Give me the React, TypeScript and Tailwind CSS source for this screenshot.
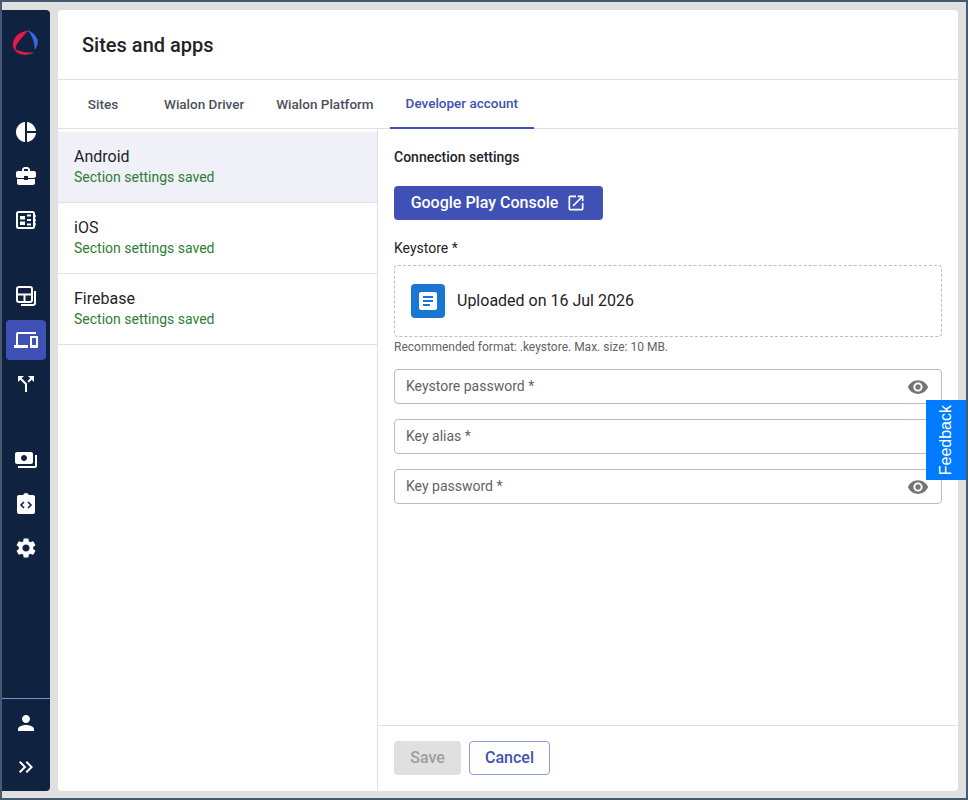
import { ReactNode } from "react";

const roboto = "font-['Roboto',sans-serif]";

function Icon({ d, className = "h-6 w-6" }: { d: string; className?: string }) {
  return (
    <svg viewBox="0 0 24 24" fill="currentColor" className={className}>
      <path d={d} />
    </svg>
  );
}

const icons = {
  pie: "M11 2v20c-5.07-.5-9-4.79-9-10s3.93-9.5 9-10zm2.03 0v8.99H22c-.47-4.74-4.24-8.52-8.97-8.99zm0 11.01V22c4.74-.47 8.5-4.25 8.97-8.99h-8.97z",
  case: "M10 16v-1H3.01L3 19c0 1.11.89 2 2 2h14c1.11 0 2-.89 2-2v-4h-7v1h-4zm10-9h-4.01V5l-2-2h-4l-2 2v2H4c-1.1 0-2 .9-2 2v3c0 1.11.89 2 2 2h6v-2h4v2h6c1.1 0 2-.9 2-2V9c0-1.1-.9-2-2-2zm-6 0h-4V5h4v2z",
  devices: "M4 6h18V4H4c-1.1 0-2 .9-2 2v11H0v3h14v-3H4V6zm19 2h-6c-.55 0-1 .45-1 1v10c0 .55.45 1 1 1h6c.55 0 1-.45 1-1V9c0-.55-.45-1-1-1zm-1 9h-4v-7h4v7z",
  split: "M14 4l2.29 2.29-2.88 2.88 1.42 1.42 2.88-2.88L20 10V4h-6zm-4 0H4v6l2.29-2.29 4.71 4.7V20h2v-8.41l-5.29-5.3L10 4z",
  payments: "M19 14V6c0-1.1-.9-2-2-2H3c-1.1 0-2 .9-2 2v8c0 1.1.9 2 2 2h14c1.1 0 2-.9 2-2zm-9-1c-1.66 0-3-1.34-3-3s1.34-3 3-3 3 1.34 3 3-1.34 3-3 3zm13-6v11c0 1.1-.9 2-2 2H4v-2h17V7h2z",
  settings: "M19.14 12.94c.04-.3.06-.61.06-.94 0-.32-.02-.64-.07-.94l2.03-1.58c.18-.14.23-.41.12-.61l-1.92-3.32c-.12-.22-.37-.29-.59-.22l-2.39.96c-.5-.38-1.03-.7-1.62-.94l-.36-2.54c-.04-.24-.24-.41-.48-.41h-3.84c-.24 0-.43.17-.47.41l-.36 2.54c-.59.24-1.13.57-1.62.94l-2.39-.96c-.22-.08-.47 0-.59.22L2.74 8.87c-.12.21-.08.47.12.61l2.03 1.58c-.05.3-.09.63-.09.94s.02.64.07.94l-2.03 1.58c-.18.14-.23.41-.12.61l1.92 3.32c.12.22.37.29.59.22l2.39-.96c.5.38 1.03.7 1.62.94l.36 2.54c.05.24.24.41.48.41h3.84c.24 0 .44-.17.47-.41l.36-2.54c.59-.24 1.13-.56 1.62-.94l2.39.96c.22.08.47 0 .59-.22l1.92-3.32c.12-.22.07-.47-.12-.61l-2.01-1.58zM12 15.6c-1.98 0-3.6-1.62-3.6-3.6s1.62-3.6 3.6-3.6 3.6 1.62 3.6 3.6-1.62 3.6-3.6 3.6z",
  person: "M12 12c2.21 0 4-1.79 4-4s-1.79-4-4-4-4 1.79-4 4 1.79 4 4 4zm0 2c-2.67 0-8 1.34-8 4v2h16v-2c0-2.66-5.33-4-8-4z",
  double: "M6.41 6L5 7.41 9.58 12 5 16.59 6.41 18l6-6zM13 6l-1.41 1.41L16.17 12l-4.58 4.59L13 18l6-6z",
  eye: "M12 4.5C7 4.5 2.73 7.61 1 12c1.73 4.39 6 7.5 11 7.5s9.27-3.11 11-7.5c-1.73-4.39-6-7.5-11-7.5zM12 17c-2.76 0-5-2.24-5-5s2.24-5 5-5 5 2.24 5 5-2.24 5-5 5zm0-8c-1.66 0-3 1.34-3 3s1.34 3 3 3 3-1.34 3-3-1.34-3-3-3z",
  open: "M19 19H5V5h7V3H5c-1.11 0-2 .9-2 2v14c0 1.1.89 2 2 2h14c1.1 0 2-.9 2-2v-7h-2v7zM14 3v2h3.59l-9.83 9.83 1.41 1.41L19 6.41V10h2V3h-7z",
  article: "M19 3H5c-1.1 0-2 .9-2 2v14c0 1.1.9 2 2 2h14c1.1 0 2-.9 2-2V5c0-1.1-.9-2-2-2zm-5 14H7v-2h7v2zm3-4H7v-2h10v2zm0-4H7V7h10v2z",
};

function Logo() {
  return (
    <svg viewBox="0 0 28 28" className="h-7 w-7">
      <path d="M16.5 1.5C9 2 2 7 1 14c-.5 4 1 7 3 9-1-4 0-7 2-9.500C8.500 10 12.500 5.500 16.500 1.500z" fill="#e8174a" />
      <path d="M3.500 22c2.500 4 10 5.500 19 1.500-5 .3-12-.2-19-3z" fill="#e8174a" />
      <path d="M15.500 1c3.500 1 8 4.500 10 9.500 1 4-.5 8-3 10.500 .5-7-2-14-7-20z" fill="#3a63e6" />
    </svg>
  );
}

function FeedIcon() {
  return (
    <svg viewBox="0 0 24 24" className="h-6 w-6" fill="none" stroke="currentColor" strokeWidth="2">
      <rect x="3" y="4" width="17" height="16" rx="1.5" />
      <path d="M6 8h5v3.500H6zM6 13.500h5V17H6z" fill="currentColor" stroke="none" />
      <path d="M13 7.500h4M13 12h4M13 16.500h4" strokeWidth="1.800" />
      <path d="M21 7v2.500M21 11v2.500M21 15v2.500" strokeWidth="1.500" />
    </svg>
  );
}

function LayersIcon() {
  return (
    <svg viewBox="0 0 24 24" className="h-6 w-6" fill="none" stroke="currentColor" strokeWidth="2">
      <rect x="3" y="3" width="15" height="15" rx="2" />
      <path d="M3 10.500h15M10.500 10.500V18" />
      <path d="M21 7v12a2 2 0 0 1-2 2H7" />
    </svg>
  );
}

function CodeClipIcon() {
  return (
    <svg viewBox="0 0 24 24" className="h-6 w-6" fill="currentColor">
      <path d="M19 3h-4.180C14.400 1.840 13.300 1 12 1c-1.300 0-2.400.840-2.820 2H5c-1.100 0-2 .900-2 2v15c0 1.100.900 2 2 2h14c1.100 0 2-.900 2-2V5c0-1.100-.900-2-2-2z" />
      <path d="M10 10l-3 3 3 3M14 10l3 3-3 3" fill="none" stroke="#0f2240" strokeWidth="1.600" />
    </svg>
  );
}

function NavItem({ children, active, className = "" }: { children: ReactNode; active?: boolean; className?: string }) {
  return (
    <div className={`mx-1 flex h-10 w-10 items-center justify-center rounded text-white ${active ? "bg-[#3f51b5]" : ""} ${className}`}>
      {children}
    </div>
  );
}

function Sidebar() {
  return (
    <aside className="flex w-12 shrink-0 flex-col rounded-r-[4px] bg-[#0f2240]">
      <div className="mt-[19px] flex justify-center">
        <Logo />
      </div>
      <div className="mt-[55px] flex flex-col gap-1">
        <NavItem><Icon d={icons.pie} /></NavItem>
        <NavItem><Icon d={icons.case} /></NavItem>
        <NavItem><FeedIcon /></NavItem>
      </div>
      <div className="mt-[36px] flex flex-col gap-1">
        <NavItem><LayersIcon /></NavItem>
        <NavItem active><Icon d={icons.devices} /></NavItem>
        <NavItem><Icon d={icons.split} className="h-6 w-6 rotate-0" /></NavItem>
      </div>
      <div className="mt-[36px] flex flex-col gap-1">
        <NavItem><Icon d={icons.payments} /></NavItem>
        <NavItem><CodeClipIcon /></NavItem>
        <NavItem><Icon d={icons.settings} /></NavItem>
      </div>
      <div className="mt-auto border-t border-[#7d8cd8] pb-[4px] pt-1">
        <NavItem><Icon d={icons.person} /></NavItem>
        <NavItem className="mt-1"><Icon d={icons.double} /></NavItem>
      </div>
    </aside>
  );
}

function Tabs() {
  const tabs = ["Sites", "Wialon Driver", "Wialon Platform", "Developer account"];
  return (
    <div className="flex h-[49px] shrink-0 border-b border-[#e0e0e0]">
      {tabs.map((t, i) => (
        <div
          key={t}
          className={`-mb-px flex h-[49px] min-w-[90px] items-center justify-center px-4 text-[13.500px] font-medium ${
            i === 3 ? "border-b-2 border-[#3f51b5] text-[#3f51b5]" : "text-[#4d4f5c]"
          }`}
        >
          {t}
        </div>
      ))}
    </div>
  );
}

function SectionRow({ title, active }: { title: string; active?: boolean }) {
  return (
    <div className={`flex h-[71px] flex-col border-b border-[#e0e0e0] pl-4 pt-[15px] ${active ? "bg-[#eff0f8]" : ""}`}>
      <div className="text-[16px] leading-[20px] text-[#1f2229]">{title}</div>
      <div className="text-[14px] leading-[20px] text-[#2e7d32]">Section settings saved</div>
    </div>
  );
}

function Field({ label, eye }: { label: string; eye?: boolean }) {
  return (
    <div className="flex h-[35px] items-center justify-between rounded border border-[#bdbdbd] pl-[11px] pr-3 text-[14px] text-[#5f6368]">
      <span>{label}</span>
      {eye && <Icon d={icons.eye} className="h-[22px] w-[22px] text-[#757575]" />}
    </div>
  );
}

export default function App() {
  return (
    <div className={`relative flex h-[800px] w-[968px] items-stretch gap-2 overflow-hidden border-2 border-[#475872] bg-[#e0e0e0] pb-[7px] pr-2 pt-2 ${roboto}`}>
      <Sidebar />
      <main className="flex min-w-0 flex-1 flex-col rounded bg-white">
        <header className="flex h-[70px] shrink-0 items-center border-b border-[#e0e0e0] pl-6">
          <h1 className="text-[20px] font-medium text-[#1f2229]">Sites and apps</h1>
        </header>
        <Tabs />
        <div className="flex min-h-0 flex-1">
          <div className="w-[320px] shrink-0 border-r border-[#e0e0e0]">
            <div className="h-[3px] bg-white" />
            <SectionRow title="Android" active />
            <SectionRow title="iOS" />
            <SectionRow title="Firebase" />
          </div>
          <div className="flex min-w-0 flex-1 flex-col">
            <div className="flex-1 px-4 pt-[19px]">
              <div className="text-[14px] font-medium leading-[18px] text-[#1f2229]">Connection settings</div>
              <div className="mt-[20px] flex h-[34px] w-[209px] items-center justify-center gap-2 rounded bg-[#3f51b5] text-[16px] font-medium text-white">
                Google Play Console
                <Icon d={icons.open} className="h-5 w-5" />
              </div>
              <div className="mt-[19px] text-[14px] leading-[18px] text-[#1f2229]">Keystore *</div>
              <div className="mt-[8px] flex h-[72px] items-center gap-3 rounded border border-dashed border-[#bdbdbd] pl-4">
                <div className="flex h-[34px] w-[34px] items-center justify-center rounded bg-[#1976d2] text-white">
                  <Icon d={icons.article} className="h-6 w-6" />
                </div>
                <span className="text-[16px] text-[#1f2229]">Uploaded on 16 Jul 2026</span>
              </div>
              <div className="mt-[3px] text-[12px] leading-[14px] text-[#5f6368]">Recommended format: .keystore. Max. size: 10 MB.</div>
              <div className="mt-[15px] flex flex-col gap-[15px]">
                <Field label="Keystore password *" eye />
                <Field label="Key alias *" />
                <Field label="Key password *" eye />
              </div>
            </div>
            <div className="flex h-[66px] shrink-0 items-start gap-2 border-t border-[#e0e0e0] pl-4 pt-[15px]">
              <div className="flex h-[34px] w-[67px] items-center justify-center rounded bg-[#e0e0e0] text-[16px] font-medium text-[#9e9e9e]">Save</div>
              <div className="flex h-[34px] w-[81px] items-center justify-center rounded border border-[#8c9eda] text-[16px] font-medium text-[#3f51b5]">Cancel</div>
            </div>
          </div>
        </div>
      </main>
      <div className="absolute right-[0px] top-[398px] flex h-20 w-10 items-center justify-center bg-[#007bff] font-['Liberation_Sans',sans-serif] text-[16px] text-white">
        <span className="rotate-180 [writing-mode:vertical-rl]">Feedback</span>
      </div>
    </div>
  );
}
